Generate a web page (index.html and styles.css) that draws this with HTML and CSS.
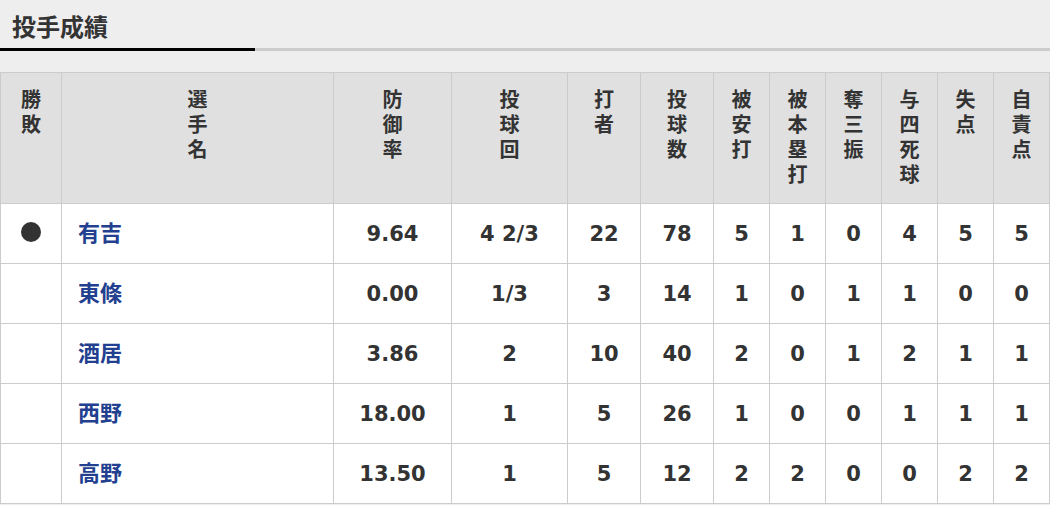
FILE: index.html
```html
<!DOCTYPE html>
<html lang="ja">
<head>
<meta charset="utf-8">
<title>投手成績</title>
<link rel="stylesheet" href="styles.css">
</head>
<body>
<div class="section">
  <h2 class="heading">投手成績</h2>
  <div class="tabbar"><span class="tab-active"></span><span class="tab-rest"></span></div>
  <table class="stats">
    <colgroup>
      <col class="c-wl"><col class="c-name"><col class="c-era"><col class="c-ip"><col class="c-bf"><col class="c-np">
      <col class="c-s"><col class="c-s"><col class="c-s"><col class="c-s"><col class="c-s"><col class="c-s">
    </colgroup>
    <thead>
      <tr>
        <th>勝<br>敗</th>
        <th>選<br>手<br>名</th>
        <th>防<br>御<br>率</th>
        <th>投<br>球<br>回</th>
        <th>打<br>者</th>
        <th>投<br>球<br>数</th>
        <th>被<br>安<br>打</th>
        <th>被<br>本<br>塁<br>打</th>
        <th>奪<br>三<br>振</th>
        <th>与<br>四<br>死<br>球</th>
        <th>失<br>点</th>
        <th>自<br>責<br>点</th>
      </tr>
    </thead>
    <tbody>
      <tr>
        <td><span class="loss-mark"></span></td>
        <td class="name"><span class="pname">有吉</span></td>
        <td>9.64</td><td>4 2/3</td><td>22</td><td>78</td><td>5</td><td>1</td><td>0</td><td>4</td><td>5</td><td>5</td>
      </tr>
      <tr>
        <td></td>
        <td class="name"><span class="pname">東條</span></td>
        <td>0.00</td><td>1/3</td><td>3</td><td>14</td><td>1</td><td>0</td><td>1</td><td>1</td><td>0</td><td>0</td>
      </tr>
      <tr>
        <td></td>
        <td class="name"><span class="pname">酒居</span></td>
        <td>3.86</td><td>2</td><td>10</td><td>40</td><td>2</td><td>0</td><td>1</td><td>2</td><td>1</td><td>1</td>
      </tr>
      <tr>
        <td></td>
        <td class="name"><span class="pname">西野</span></td>
        <td>18.00</td><td>1</td><td>5</td><td>26</td><td>1</td><td>0</td><td>0</td><td>1</td><td>1</td><td>1</td>
      </tr>
      <tr>
        <td></td>
        <td class="name"><span class="pname">高野</span></td>
        <td>13.50</td><td>1</td><td>5</td><td>12</td><td>2</td><td>2</td><td>0</td><td>0</td><td>2</td><td>2</td>
      </tr>
    </tbody>
  </table>
</div>
</body>
</html>
```

FILE: styles.css
```css
html, body {
  margin: 0;
  padding: 0;
  background: #eeeeee;
}

body {
  font-family: "DejaVu Sans", "Noto Sans CJK JP", sans-serif;
  color: #333333;
}

.section {
  width: 1050px;
}

.heading {
  margin: 0;
  height: 48px;
  box-sizing: border-box;
  padding: 12px 12px 0;
  font-family: "Noto Sans CJK JP", sans-serif;
  font-size: 24px;
  line-height: 28px;
  font-weight: 700;
  color: #333333;
}

.tabbar {
  display: flex;
  height: 3px;
  margin-bottom: 21px;
}

.tab-active {
  width: 255px;
  background: #000000;
}

.tab-rest {
  flex: 1;
  background: #cccccc;
}

.stats {
  border-collapse: collapse;
  table-layout: fixed;
  width: 1050px;
}

.c-wl { width: 61px; }
.c-name { width: 272px; }
.c-era { width: 118px; }
.c-ip { width: 116px; }
.c-bf { width: 73px; }
.c-np { width: 73px; }
.c-s { width: 56px; }

.stats th,
.stats td {
  border: 1px solid #cccccc;
  padding: 0;
  text-align: center;
}

.stats th {
  background: #e0e0e0;
  height: 131px;
  vertical-align: top;
  padding-top: 13px;
  box-sizing: border-box;
  font-family: "Noto Sans CJK JP", sans-serif;
  font-size: 20px;
  line-height: 25px;
  font-weight: 700;
  color: #333333;
}

.stats td {
  background: #ffffff;
  height: 59px;
  vertical-align: middle;
  font-size: 21px;
  line-height: 26px;
  font-weight: 700;
  color: #333333;
}

.stats td.name {
  text-align: left;
  padding-left: 16px;
  font-family: "Noto Sans CJK JP", sans-serif;
  font-size: 22px;
  line-height: 22px;
  color: #233f8f;
}

.pname {
  display: block;
  padding-bottom: 5px;
}

.loss-mark {
  display: inline-block;
  width: 20px;
  height: 20px;
  border-radius: 50%;
  background: #333333;
  vertical-align: middle;
  position: relative;
  top: -3px;
}
```
